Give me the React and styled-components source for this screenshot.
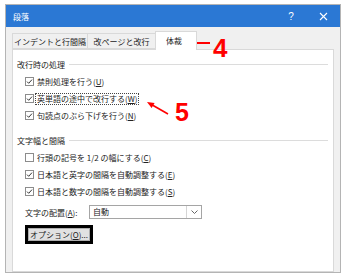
import styled, { createGlobalStyle } from "styled-components";

const GlobalStyle = createGlobalStyle`
  html, body {
    margin: 0;
    padding: 0;
    background: #fff;
  }
  body {
    font-family: "Noto Sans CJK JP", "Noto Sans", sans-serif;
    font-size: 8px;
    color: #222;
  }
`;

const Dialog = styled.div`
  position: relative;
  box-sizing: border-box;
  width: 336px;
  height: 269px;
  margin: 4px 0 0 5px;
  border: 1px solid #b4b4b4;
  background: #f0f0f0;
  display: flex;
  flex-direction: column;
`;

const TitleBar = styled.div`
  display: flex;
  align-items: center;
  height: 22px;
  padding-left: 7px;
  background: #2b78d4;
  color: #fff;
  font-size: 8px;
`;

const TitleText = styled.span`
  flex: 1;
`;

const TitleButton = styled.div`
  width: ${(p) => p.$w}px;
  height: 22px;
  display: flex;
  align-items: center;
  justify-content: center;
  font-family: "Liberation Sans", sans-serif;
  font-size: 10px;
`;

const Body = styled.div`
  flex: 1;
  display: flex;
  flex-direction: column;
  padding: 4px 6px 0;
`;

const TabRow = styled.div`
  display: flex;
  align-items: flex-end;
  height: 18px;
`;

const Tab = styled.div`
  position: relative;
  z-index: 1;
  box-sizing: border-box;
  width: ${(p) => p.$w}px;
  height: ${(p) => (p.$active ? 19 : 16)}px;
  margin-bottom: ${(p) => (p.$active ? -1 : 0)}px;
  margin-left: ${(p) => (p.$first ? 0 : -1)}px;
  border: 1px solid #d9d9d9;
  border-bottom: ${(p) => (p.$active ? "none" : "1px solid #d9d9d9")};
  background: ${(p) => (p.$active ? "#fff" : "#f0f0f0")};
  display: flex;
  align-items: center;
  justify-content: center;
  padding-bottom: ${(p) => (p.$active ? 2 : 0)}px;
  padding-right: ${(p) => (p.$active ? 4 : 0)}px;
`;

const Panel = styled.div`
  flex: 1;
  box-sizing: border-box;
  border: 1px solid #d9d9d9;
  background: #fff;
  padding: 8px 4px 0 4px;
`;

const SectionHeader = styled.div`
  display: flex;
  align-items: center;
  gap: 4px;
  height: 12px;
  margin-top: ${(p) => p.$mt || 0}px;
  margin-bottom: 3px;
`;

const Rule = styled.div`
  flex: 1;
  height: 1px;
  background: #dcdcdc;
  margin-right: 1px;
`;

const CheckRow = styled.div`
  display: flex;
  align-items: center;
  gap: 3px;
  height: 17px;
  padding-left: 8px;
`;

const Focus = styled.span`
  border: 1px dotted #444;
  margin-left: -2px;
  padding: 0 1px;
  line-height: 10px;
`;

const SelectRow = styled.div`
  display: flex;
  align-items: center;
  height: 14px;
  margin-top: 5px;
  padding-left: 8px;
`;

const SelectLabel = styled.span`
  width: 64px;
`;

const Select = styled.div`
  box-sizing: border-box;
  width: 113px;
  height: 14px;
  border: 1px solid #a5a5a5;
  background: #fff;
  display: flex;
`;

const SelectValue = styled.span`
  flex: 1;
  padding-left: 3px;
  line-height: 12px;
`;

const SelectArrow = styled.span`
  width: 14px;
  border-left: 1px solid #d5d5d5;
  display: flex;
  align-items: center;
  justify-content: center;
`;

const Frame = styled.div`
  box-sizing: border-box;
  width: 68px;
  height: 19px;
  margin: 6px 0 0 8px;
  border: 3px solid #000;
`;

const Button = styled.div`
  box-sizing: border-box;
  height: 100%;
  background: #e1e1e1;
  border: 1px solid #adadad;
  padding-left: 1px;
  line-height: 11px;
  white-space: nowrap;
`;

const Callout = styled.span`
  position: absolute;
  left: ${(p) => p.$x}px;
  top: ${(p) => p.$y}px;
  font-family: "Liberation Sans", Arial, sans-serif;
  font-weight: bold;
  font-size: ${(p) => p.$size}px;
  line-height: 1;
  color: #f00;
`;

const Overlay = styled.svg`
  position: absolute;
  left: -6px;
  top: -5px;
  pointer-events: none;
`;

const CheckBox = ({ checked }) => (
  <svg width="9" height="9" viewBox="0 0 9 9">
    <rect x="0.5" y="0.5" width="8" height="8" fill="#fff" stroke="#8c8c8c" />
    {checked && (
      <path d="M2 4.6 L3.7 6.3 L7 2.6" fill="none" stroke="#333" strokeWidth="1" />
    )}
  </svg>
);

const Option = ({ checked, children }) => (
  <CheckRow>
    <CheckBox checked={checked} />
    {children}
  </CheckRow>
);

export default function App() {
  return (
    <>
      <GlobalStyle />
      <Dialog>
        <TitleBar>
          <TitleText>段落</TitleText>
          <TitleButton $w={30}>?</TitleButton>
          <TitleButton $w={34}>
            <svg width="9" height="9" viewBox="0 0 9 9">
              <path d="M1 1 L8 8 M8 1 L1 8" stroke="#fff" strokeWidth="1.1" />
            </svg>
          </TitleButton>
        </TitleBar>
        <Body>
          <TabRow>
            <Tab $w={76} $first>インデントと行間隔</Tab>
            <Tab $w={69}>改ページと改行</Tab>
            <Tab $w={42} $active>体裁</Tab>
          </TabRow>
          <Panel>
            <SectionHeader>
              改行時の処理
              <Rule />
            </SectionHeader>
            <Option checked>
              <span>禁則処理を行う(<u>U</u>)</span>
            </Option>
            <Option checked>
              <Focus>英単語の途中で改行する(<u>W</u>)</Focus>
            </Option>
            <Option checked>
              <span>句読点のぶら下げを行う(<u>N</u>)</span>
            </Option>

            <SectionHeader $mt={10}>
              文字幅と間隔
              <Rule />
            </SectionHeader>
            <Option>
              <span>行頭の記号を 1/2 の幅にする(<u>C</u>)</span>
            </Option>
            <Option checked>
              <span>日本語と英字の間隔を自動調整する(<u>E</u>)</span>
            </Option>
            <Option checked>
              <span>日本語と数字の間隔を自動調整する(<u>S</u>)</span>
            </Option>

            <SelectRow>
              <SelectLabel>文字の配置(<u>A</u>):</SelectLabel>
              <Select>
                <SelectValue>自動</SelectValue>
                <SelectArrow>
                  <svg width="7" height="4" viewBox="0 0 7 4">
                    <path d="M0.5 0.5 L3.5 3.5 L6.5 0.5" fill="none" stroke="#666" />
                  </svg>
                </SelectArrow>
              </Select>
            </SelectRow>
            <Frame>
              <Button>オプション(<u>O</u>)...</Button>
            </Frame>
          </Panel>
        </Body>

        <Callout $x={207} $y={29.5} $size={26}>4</Callout>
        <Callout $x={169} $y={94.5} $size={25}>5</Callout>
        <Overlay width="343" height="276" viewBox="0 0 343 276">
          <line x1="210" y1="43" x2="188" y2="43" stroke="#f00" strokeWidth="2" />
          <polygon points="183,43 190,39.5 190,46.5" fill="#f00" />
          <line x1="168" y1="114" x2="151" y2="104.3" stroke="#f00" strokeWidth="1.6" />
          <polygon points="147,102 154.6,102.9 151.6,108.1" fill="#f00" />
        </Overlay>
      </Dialog>
    </>
  );
}
